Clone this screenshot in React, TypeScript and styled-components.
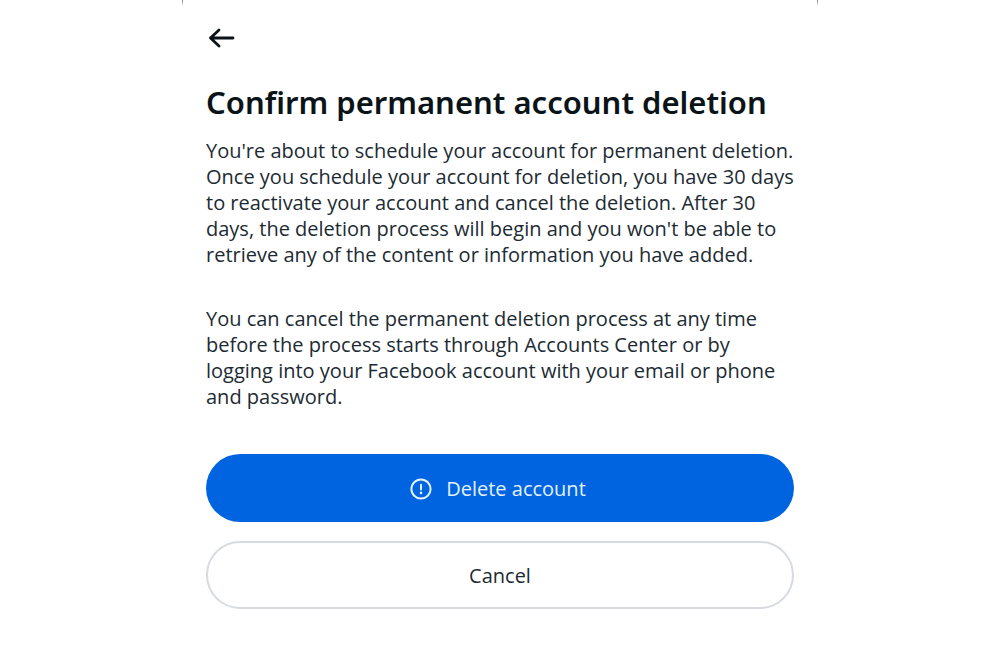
import React from "react";
import styled, { createGlobalStyle } from "styled-components";

const GlobalStyle = createGlobalStyle`
  *, *::before, *::after { box-sizing: border-box; }
  body {
    margin: 0;
    background: #fff;
    color: #1c2b33;
    font-family: "Open Sans", "Noto Sans", sans-serif;
  }
`;

const Sheet = styled.main`
  position: relative;
  width: 100%;
  max-width: 636px;
  margin: 0 auto;
  padding: 24px 24px 40px;
`;

const EdgeMark = styled.span<{ $side: "left" | "right" }>`
  position: absolute;
  top: 0;
  ${(p) => p.$side}: 0;
  width: 1px;
  height: 6px;
  background: linear-gradient(#777, #fff);
`;

const BackButton = styled.button`
  display: block;
  padding: 0;
  border: 0;
  background: none;
  color: #0a1317;
  line-height: 0;
  cursor: pointer;
`;

const Title = styled.h1`
  margin: 29px 0 15px;
  color: #0a1317;
  font-family: "Noto Sans", "Open Sans", sans-serif;
  font-size: 31px;
  font-weight: 600;
  line-height: 42px;
`;

const Text = styled.p`
  margin: 0 0 38px;
  font-size: 20px;
  line-height: 26px;
`;

const Actions = styled.div`
  display: flex;
  flex-direction: column;
  gap: 19px;
  margin-top: 44px;
`;

const Button = styled.button<{ $primary?: boolean }>`
  display: flex;
  align-items: center;
  justify-content: center;
  gap: 14px;
  width: 100%;
  height: 68px;
  padding: ${(p) => (p.$primary ? "1px 28px 0 24px" : "1px 24px 0")};
  border: ${(p) => (p.$primary ? "0" : "2px solid #d7dbdf")};
  border-radius: 34px;
  background: ${(p) => (p.$primary ? "#0064e0" : "#fff")};
  color: ${(p) => (p.$primary ? "#e3f1ff" : "#1c2b33")};
  font: 400 20px/26px "Open Sans", "Noto Sans", sans-serif;
  cursor: pointer;
`;

export default function App() {
  return (
    <>
      <GlobalStyle />
      <Sheet>
        <EdgeMark $side="left" />
        <EdgeMark $side="right" />
        <BackButton type="button" aria-label="Back">
          <svg width="30" height="28" viewBox="0 0 30 28" fill="none" stroke="currentColor" strokeWidth="2.8" strokeLinecap="round" strokeLinejoin="round">
            <path d="M27 14H4.5M13 6L4.5 14L13 22" />
          </svg>
        </BackButton>
        <Title>Confirm permanent account deletion</Title>
        <Text>
          You're about to schedule your account for permanent deletion. Once you
          schedule your account for deletion, you have 30 days to reactivate
          your account and cancel the deletion. After 30 days, the deletion
          process will begin and you won't be able to retrieve any of the
          content or information you have added.
        </Text>
        <Text>
          You can cancel the permanent deletion process at any time before the
          process starts through Accounts Center or by logging into your
          Facebook account with your email or phone and password.
        </Text>
        <Actions>
          <Button type="button" $primary>
            <svg width="22" height="22" viewBox="0 0 22 22" fill="none" stroke="currentColor" strokeWidth="2" strokeLinecap="round" aria-hidden="true">
              <circle cx="11" cy="11" r="9.6" />
              <path d="M11 6.8V11.4" />
              <circle cx="11" cy="14.9" r="1.3" fill="currentColor" stroke="none" />
            </svg>
            Delete account
          </Button>
          <Button type="button">Cancel</Button>
        </Actions>
      </Sheet>
    </>
  );
}
